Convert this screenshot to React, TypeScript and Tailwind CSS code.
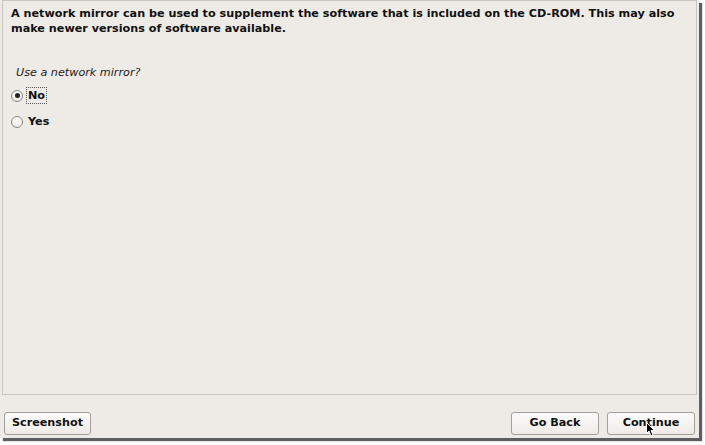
import React, { useState } from "react";

const font = { fontFamily: '"DejaVu Sans", Verdana, sans-serif' };

function Radio({ checked }: { checked: boolean }) {
  return (
    <span className="flex h-[12px] w-[12px] items-center justify-center rounded-full border border-[#8a8783] bg-gradient-to-b from-[#ffffff] to-[#ece9e5]">
      {checked && <span className="h-[5px] w-[5px] rounded-full bg-[#222]" />}
    </span>
  );
}

function Button({ label, className = "" }: { label: string; className?: string }) {
  return (
    <button
      type="button"
      className={`flex h-[23px] items-center justify-center rounded-[3px] border border-[#a29e99] bg-gradient-to-b from-[#fcfbfa] to-[#eeebe7] text-[11.2px] font-bold text-[#111] ${className}`}
    >
      {label}
    </button>
  );
}

export default function App() {
  const [mirror, setMirror] = useState("No");
  return (
    <div className="h-[445px] w-[705px] bg-white" style={font}>
      <div className="flex h-[438px] w-[699px] flex-col bg-[#eeebe7] shadow-[3px_3px_1px_rgba(40,40,40,0.75)]">
        <div className="mx-[2px] flex h-[395px] flex-col border border-[#c9c5c0] px-[8px] pt-[5px]">
          <p className="text-[11.2px] font-bold leading-[15px] text-[#111]">
            A network mirror can be used to supplement the software that is included on the CD-ROM. This may also
            make newer versions of software available.
          </p>
          <p className="mt-[30px] pl-[5px] text-[11.2px] italic leading-[14px] text-[#222]">Use a network mirror?</p>
          <div className="mt-[8px] flex flex-col gap-[11px]">
            {["No", "Yes"].map((opt) => (
              <label key={opt} className="flex items-center gap-[4px]" onClick={() => setMirror(opt)}>
                <Radio checked={mirror === opt} />
                <span
                  className={`px-[1px] text-[11.2px] font-bold leading-[15px] text-[#111] ${
                    opt === "No" ? "outline outline-1 outline-dotted outline-[#555]" : ""
                  }`}
                >
                  {opt}
                </span>
              </label>
            ))}
          </div>
        </div>
        <div className="mt-[17px] flex items-center px-[4px]">
          <Button label="Screenshot" className="w-[87px]" />
          <div className="flex-1" />
          <Button label="Go Back" className="w-[88px]" />
          <div className="relative ml-[8px]">
            <Button label="Continue" className="w-[88px]" />
            <svg className="absolute left-[39px] top-[10px]" width="10" height="15" viewBox="0 0 10 15">
              <path d="M0.5 0.5 L0.5 11.5 L3 9 L5 14 L7 13 L5 8.5 L8.5 8.5 Z" fill="#000" stroke="#fff" strokeWidth="1" />
            </svg>
          </div>
        </div>
      </div>
    </div>
  );
}
